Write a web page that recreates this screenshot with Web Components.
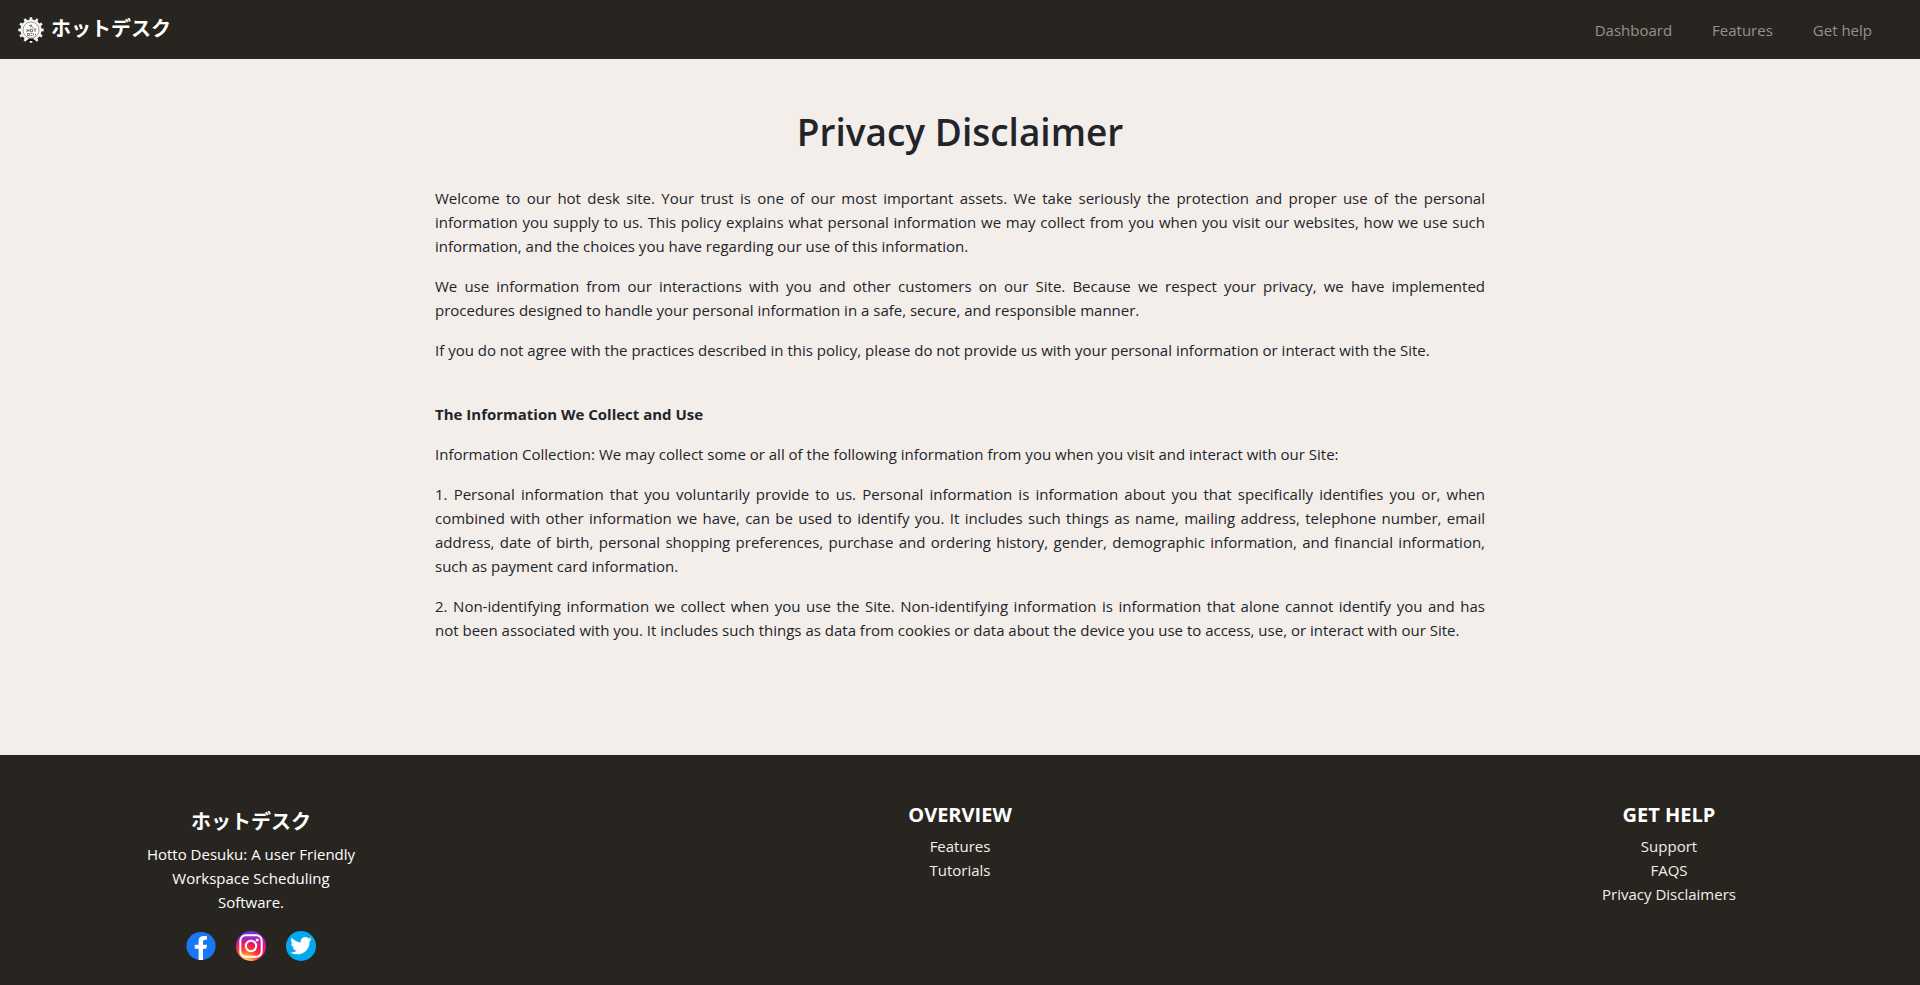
<!DOCTYPE html>
<html lang="en">
<head>
<meta charset="utf-8">
<meta name="viewport" content="width=device-width, initial-scale=1">
<title>Privacy Disclaimer</title>
<style>
  html, body { margin: 0; }
  body {
    --ink: #212529;
    --dark: #282521;
    --paper: #f4eeea;
    min-height: 100vh;
    display: flex;
    flex-direction: column;
    background: var(--paper);
    color: var(--ink);
    font: 15px/24px "Open Sans", "Noto Sans CJK JP", sans-serif;
  }
  site-footer { flex: 1; }
</style>
</head>
<body>
<site-header>
  <nav-link href="#dashboard">Dashboard</nav-link>
  <nav-link href="#features">Features</nav-link>
  <nav-link href="#help">Get help</nav-link>
</site-header>

<policy-article heading="Privacy Disclaimer">
  <policy-section>
    <p>Welcome to our hot desk site. Your trust is one of our most important assets. We take seriously the protection and proper use of the personal information you supply to us. This policy explains what personal information we may collect from you when you visit our websites, how we use such information, and the choices you have regarding our use of this information.</p>
    <p>We use information from our interactions with you and other customers on our Site. Because we respect your privacy, we have implemented procedures designed to handle your personal information in a safe, secure, and responsible manner.</p>
    <p>If you do not agree with the practices described in this policy, please do not provide us with your personal information or interact with the Site.</p>
  </policy-section>
  <policy-section heading="The Information We Collect and Use">
    <p>Information Collection: We may collect some or all of the following information from you when you visit and interact with our Site:</p>
    <p>1. Personal information that you voluntarily provide to us. Personal information is information about you that specifically identifies you or, when combined with other information we have, can be used to identify you. It includes such things as name, mailing address, telephone number, email address, date of birth, personal shopping preferences, purchase and ordering history, gender, demographic information, and financial information, such as payment card information.</p>
    <p>2. Non-identifying information we collect when you use the Site. Non-identifying information is information that alone cannot identify you and has not&nbsp;been associated with you. It includes such things as data from cookies or data about the device you use to access, use, or interact with our Site.</p>
  </policy-section>
</policy-article>

<site-footer>
  <footer-about>Hotto Desuku: A user Friendly Workspace Scheduling Software.</footer-about>
  <footer-links heading="OVERVIEW">
    <footer-link href="#features">Features</footer-link>
    <footer-link href="#tutorials">Tutorials</footer-link>
  </footer-links>
  <footer-links heading="GET HELP">
    <footer-link href="#support">Support</footer-link>
    <footer-link href="#faqs">FAQS</footer-link>
    <footer-link href="#privacy">Privacy Disclaimers</footer-link>
  </footer-links>
</site-footer>

<script>
  function define(name, render) {
    customElements.define(name, class extends HTMLElement {
      constructor() {
        super();
        this.attachShadow({ mode: "open" });
      }
      connectedCallback() {
        this.shadowRoot.innerHTML = render(this);
      }
    });
  }

  // Gear outline with twelve teeth around a ring.
  function gearPath() {
    const teeth = 12, pts = [];
    for (let i = 0; i < teeth; i++) {
      [[-0.26, 10.6], [-0.18, 12.8], [0.18, 12.8], [0.26, 10.6]].forEach(([o, r]) => {
        const a = (i + o) / teeth * Math.PI * 2;
        pts.push((13 + r * Math.sin(a)).toFixed(2) + " " + (13 - r * Math.cos(a)).toFixed(2));
      });
    }
    return "M" + pts.join("L") + "Z";
  }

  define("gear-logo", () => `
    <style>:host, svg { display: block; width: 26px; height: 26px; }</style>
    <svg viewBox="0 0 26 26" aria-hidden="true">
      <path d="${gearPath()}" fill="#f2f2f2"/>
      <circle cx="13" cy="13" r="8" fill="#fff" stroke="#888" stroke-width=".8"/>
      <path d="M11 8.500h2l2 2.500M13.500 7.500l-1 3M9 12v3M11 12v3M9 13.500h2M12.500 12.300h2v2.500h-2zM15.500 12h3M17 12v3M9.500 16.500h2v2h-2zM12.500 16.500h2M12.500 18.500h2M15.500 16.500v2M17.500 16.500v2" fill="none" stroke="#5b5b5b" stroke-width=".8"/>
      <path d="M10.500 21.400h5l1 2.600h-7z" fill="#111"/>
    </svg>`);

  define("nav-link", el => `
    <style>
      :host { display: block; }
      a { color: #94928f; text-decoration: none; }
      a:hover { color: #fff; }
    </style>
    <a href="${el.getAttribute("href")}"><slot></slot></a>`);

  define("site-header", () => `
    <style>
      :host { display: block; background: var(--dark); }
      header { display: flex; align-items: center; justify-content: space-between; min-height: 59px; padding: 0 48px 0 18px; }
      .brand { display: flex; align-items: center; gap: 7px; color: #fff; text-decoration: none; font-weight: 700; font-size: 20px; line-height: 24px; }
      .brand span { padding-bottom: 2px; }
      nav { display: flex; gap: 40px; }
    </style>
    <header>
      <a class="brand" href="#home"><gear-logo></gear-logo><span lang="ja">ホットデスク</span></a>
      <nav><slot></slot></nav>
    </header>`);

  define("policy-article", el => `
    <style>
      :host { display: block; }
      main { max-width: 1050px; margin: 0 auto; padding: 49px 24px 113px; display: flex; flex-direction: column; gap: 40px; }
      h1 { margin: 0 0 -10px; font-size: 37px; line-height: 48px; font-weight: 600; text-align: center; }
    </style>
    <main><h1>${el.getAttribute("heading")}</h1><slot></slot></main>`);

  define("policy-section", el => `
    <style>
      :host { display: flex; flex-direction: column; gap: 16px; text-align: justify; }
      h2 { margin: 0; font-size: 15px; line-height: 24px; font-weight: 700; }
      ::slotted(p) { margin: 0; }
    </style>
    ${el.hasAttribute("heading") ? `<h2>${el.getAttribute("heading")}</h2>` : ""}
    <slot></slot>`);

  define("site-footer", () => `
    <style>
      :host { display: block; background: var(--dark); color: #fff; }
      footer { display: grid; grid-template-columns: repeat(3, 222px); justify-content: space-between; padding: 47px 140px 20px; text-align: center; }
    </style>
    <footer><slot></slot></footer>`);

  define("footer-about", () => `
    <style>
      :host { display: block; padding-top: 8px; }
      h2 { margin: 0 0 8px; font-size: 20px; line-height: 24px; font-weight: 700; }
      p { margin: 0; padding: 0 4px; }
      div { display: flex; justify-content: center; gap: 20px; padding-top: 17px; }
    </style>
    <h2 lang="ja">ホットデスク</h2>
    <p><slot></slot></p>
    <div>
      <social-link network="facebook"></social-link>
      <social-link network="instagram"></social-link>
      <social-link network="twitter"></social-link>
    </div>`);

  const icons = {
    facebook: `
      <ellipse cx="15" cy="15" rx="14.600" ry="14" fill="#1877f2"/>
      <path d="M12.600 28.900V17.700H8.800v-4h3.800v-3.200c0-3.600 2.100-5.400 5.400-5.400 1.500 0 2.900.2 2.900.2v3.500h-1.700c-1.700 0-2.200 1-2.200 2.100v2.800h4l-.7 4H17v11.200a15 15 0 0 1-4.400 0z" fill="#fff"/>`,
    instagram: `
      <defs>
        <linearGradient id="top" x1="0" y1="0" x2=".3" y2="1"><stop offset="0" stop-color="#4b3ce0"/><stop offset=".4" stop-color="#a822c4"/><stop offset=".75" stop-color="#e8127c"/></linearGradient>
        <radialGradient id="glow" cx=".3" cy="1.050" r=".85"><stop offset="0" stop-color="#ffdc7c"/><stop offset=".25" stop-color="#ffb04a"/><stop offset=".5" stop-color="#ff4a26"/><stop offset=".75" stop-color="#ff1650" stop-opacity=".8"/><stop offset="1" stop-color="#e01a8c" stop-opacity="0"/></radialGradient>
      </defs>
      <circle cx="15" cy="15" r="15" fill="url(#top)"/>
      <circle cx="15" cy="15" r="15" fill="url(#glow)"/>
      <g fill="none" stroke="#fff" stroke-width="2"><rect x="4.300" y="4.300" width="21.400" height="21.400" rx="5.500"/><circle cx="15" cy="15" r="5.200"/></g>
      <circle cx="21.200" cy="8.900" r="1.500" fill="#fff"/>`,
    twitter: `
      <circle cx="15" cy="15" r="15" fill="#03a9f0"/>
      <path transform="translate(4.400 4) scale(.89)" d="M23.950 4.570a10 10 0 0 1-2.820.78 4.960 4.960 0 0 0 2.160-2.730c-.95.560-2 .960-3.130 1.190a4.920 4.920 0 0 0-8.380 4.480A13.900 13.900 0 0 1 1.640 3.160a4.920 4.920 0 0 0 1.520 6.570 4.900 4.900 0 0 1-2.230-.61v.06a4.920 4.920 0 0 0 3.950 4.830 5 5 0 0 1-2.210.08 4.940 4.940 0 0 0 4.600 3.420A9.870 9.870 0 0 1 0 19.540a14 14 0 0 0 7.550 2.210c9.050 0 14-7.500 14-13.980 0-.21 0-.42-.02-.63a9.900 9.900 0 0 0 2.460-2.550z" fill="#fff"/>`
  };

  define("social-link", el => {
    const network = el.getAttribute("network");
    return `
    <style>:host, a, svg { display: block; width: 30px; height: 30px; }</style>
    <a href="#${network}" aria-label="${network}"><svg viewBox="0 0 30 30" aria-hidden="true">${icons[network]}</svg></a>`;
  });

  define("footer-links", el => `
    <style>
      :host { display: block; }
      h2 { margin: 0 0 6px; font-size: 20px; line-height: 26px; font-weight: 700; }
      nav { display: flex; flex-direction: column; }
    </style>
    <h2>${el.getAttribute("heading")}</h2>
    <nav><slot></slot></nav>`);

  define("footer-link", el => `
    <style>
      :host { display: block; }
      a { color: #f4eeea; text-decoration: none; }
      a:hover { text-decoration: underline; }
    </style>
    <a href="${el.getAttribute("href")}"><slot></slot></a>`);
</script>
</body>
</html>
